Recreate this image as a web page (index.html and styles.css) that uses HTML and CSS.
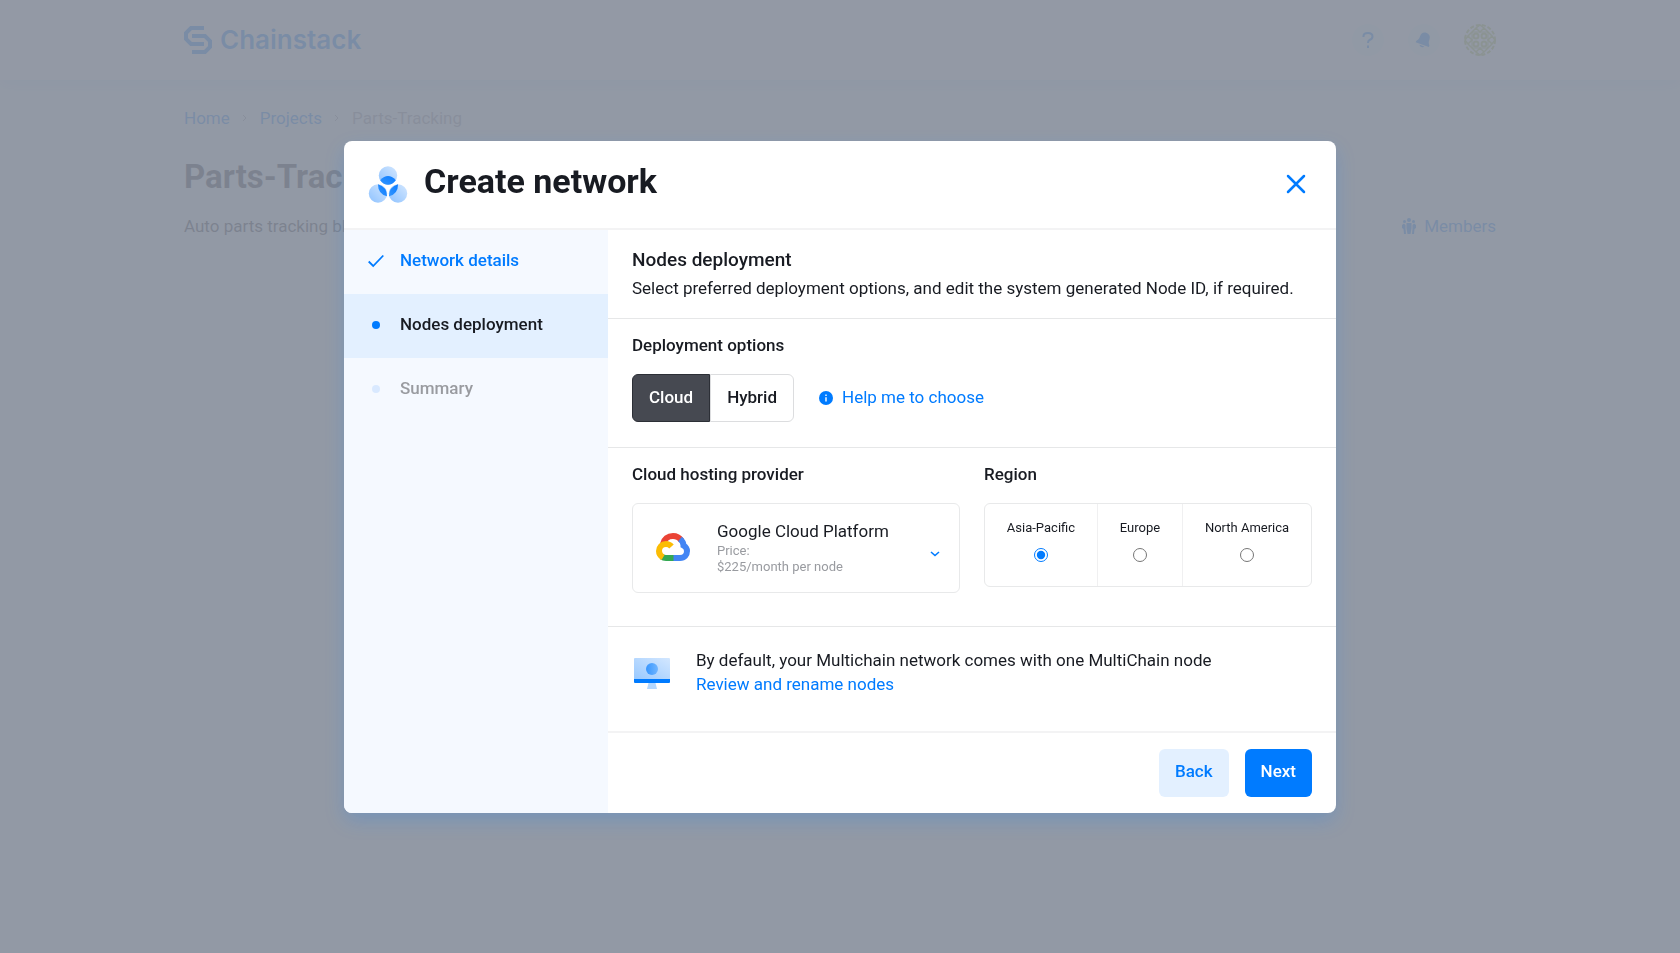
FILE: index.html
```html
<!DOCTYPE html>
<html lang="en">
<head>
<meta charset="utf-8">
<meta name="viewport" content="width=device-width, initial-scale=1">
<title>Chainstack – Create network</title>
<link rel="stylesheet" href="styles.css">
</head>
<body>
<header class="topbar">
  <div class="container topbar-inner">
    <a class="brand" href="#">
      <svg width="28" height="28" viewBox="0 0 28 28" fill="none" stroke="currentColor" stroke-width="4" aria-hidden="true">
        <path d="M20 2H7L2 7v6l5 5h13"/>
        <path d="M8 10h13l5 5v6l-5 5H8"/>
      </svg>
      <span>Chainstack</span>
    </a>
    <div class="tools">
      <button class="tool" type="button" aria-label="Help">
        <svg width="32" height="32" viewBox="0 0 32 32" fill="none" stroke="currentColor" stroke-width="2" aria-hidden="true"><path d="M11.500 13v-1q0-3 4.500-3t4.500 3.500q0 2.500-3 3.500-1.500.6-1.500 3"/><path d="M16 21.500v2.500"/></svg>
      </button>
      <button class="tool" type="button" aria-label="Notifications">
        <svg width="32" height="32" viewBox="0 0 32 32" fill="currentColor" aria-hidden="true"><g transform="rotate(20 16 16)"><path d="M16 8.500c3.500 0 5 2.500 5 5.500 0 3 .5 3.500 2 5.500V21H9v-1.500c1.500-2 2-2.500 2-5.500 0-3 1.500-5.500 5-5.500z"/><path d="M13.500 22h5c-.5 2-4.500 2-5 0z"/></g></svg>
      </button>
      <button class="avatar" type="button" aria-label="Account">
        <svg width="32" height="32" viewBox="0 0 32 32" fill="none" stroke="currentColor" stroke-width="2" aria-hidden="true">
          <circle cx="16" cy="16" r="15" stroke-dasharray="4 2"/><path d="M8 8h16v16H8z" stroke-width="1"/>
          <circle cx="12" cy="12" r="2.500"/><circle cx="20" cy="12" r="2.500"/><circle cx="12" cy="20" r="2.500"/><circle cx="20" cy="20" r="2.500"/>
          <path d="M8 8l4-4 4 4 4-4 4 4M8 24l4 4 4-4 4 4 4-4M8 8l-4 4 4 4-4 4 4 4M24 8l4 4-4 4 4 4-4 4M12 4l4-3 4 3M12 28l4 3 4-3M4 12l-3 4 3 4M28 12l3 4-3 4" stroke-width="1.500"/>
        </svg>
      </button>
    </div>
  </div>
</header>
<main class="container page">
  <nav class="crumbs" aria-label="Breadcrumb">
    <a href="#">Home</a>
    <svg width="6" height="8" viewBox="0 0 6 8" fill="none" stroke="currentColor" aria-hidden="true"><path d="M1 1l3 3-3 3"/></svg>
    <a href="#">Projects</a>
    <svg width="6" height="8" viewBox="0 0 6 8" fill="none" stroke="currentColor" aria-hidden="true"><path d="M1 1l3 3-3 3"/></svg>
    <span>Parts-Tracking</span>
  </nav>
  <h1 class="page-title">Parts-Tracking</h1>
  <div class="page-row">
    <p>Auto parts tracking blockchain</p>
    <a class="members" href="#">
      <svg width="14" height="16" viewBox="0 0 14 16" fill="currentColor" aria-hidden="true"><circle cx="7" cy="2" r="2"/><circle cx="2.500" cy="3.500" r="1.500"/><circle cx="11.500" cy="3.500" r="1.500"/><path d="M4.500 5h5v5.500l-1 5.500h-3l-1-5.500zM0 7l2-1.500L3.500 7v4l.5 5H2l-.5-5L0 10zM14 7l-2-1.500L10.500 7v4l-.5 5h2l.5-5 1.500-1z"/></svg>
      Members
    </a>
  </div>
</main>

<div class="overlay">
  <section class="modal" role="dialog" aria-modal="true" aria-labelledby="modal-title">
    <header class="modal-head">
      <svg width="40" height="39" viewBox="0 0 40 39" aria-hidden="true">
        <defs>
          <linearGradient id="bubble" x1="1" y1="0" x2="0" y2="1"><stop offset="0" stop-color="#d3e7ff"/><stop offset="1" stop-color="#8ec2ff"/></linearGradient>
          <linearGradient id="petal" x1="0" y1="1" x2="1" y2="0"><stop offset="0" stop-color="#3597ff"/><stop offset="1" stop-color="#087aff"/></linearGradient>
        </defs>
        <circle cx="20" cy="10.500" r="9.200" fill="url(#bubble)"/>
        <circle cx="10" cy="28.500" r="9.200" fill="url(#bubble)"/>
        <circle cx="30" cy="28.500" r="9.200" fill="url(#bubble)"/>
        <path d="M12.200 15.200q7.800-8.400 15.600 0-3.500 4.500-7.800 4.500t-7.800-4.500z" fill="url(#petal)"/>
        <path d="M10 19.300q9 2.500 9 12-9-2-9-12z" fill="url(#petal)"/>
        <path d="M30 19.300q-9 2.500-9 12 9-2 9-12z" fill="url(#petal)"/>
      </svg>
      <h2 class="modal-title" id="modal-title">Create network</h2>
      <button class="close" type="button" aria-label="Close">
        <svg width="20" height="20" viewBox="0 0 20 20" fill="none" stroke="currentColor" stroke-width="2.500" stroke-linecap="round" aria-hidden="true"><path d="M2 2l16 16M18 2L2 18"/></svg>
      </button>
    </header>
    <div class="modal-body">
      <ol class="steps">
        <li class="step done">
          <svg width="16" height="16" viewBox="0 0 16 16" fill="none" stroke="currentColor" stroke-width="1.800" aria-hidden="true"><path d="M.7 8.500l4.500 4.500L15.300 2.500"/></svg>
          <span>Network details</span>
        </li>
        <li class="step current" aria-current="step"><i class="dot"></i><span>Nodes deployment</span></li>
        <li class="step"><i class="dot"></i><span>Summary</span></li>
      </ol>
      <form class="content">
        <div class="block intro">
          <h3>Nodes deployment</h3>
          <p>Select preferred deployment options, and edit the system generated Node ID, if required.</p>
        </div>
        <div class="block">
          <h4 id="options-label">Deployment options</h4>
          <div class="options">
            <div class="toggle" role="group" aria-labelledby="options-label">
              <button class="on" type="button" aria-pressed="true">Cloud</button>
              <button type="button" aria-pressed="false">Hybrid</button>
            </div>
            <a class="help" href="#">
              <svg width="14" height="14" viewBox="0 0 14 14" aria-hidden="true"><circle cx="7" cy="7" r="7" fill="currentColor"/><path d="M7 3.400v1.500M7 6.200v4.400" stroke="#fff" stroke-width="1.400" fill="none"/></svg>
              <span>Help me to choose</span>
            </a>
          </div>
        </div>
        <div class="block hosting">
          <div class="field">
            <h4><label for="provider">Cloud hosting provider</label></h4>
            <div class="card provider">
              <svg width="34" height="28" viewBox="0 0 34 28" fill="none" stroke-width="6" aria-hidden="true">
                <path d="M7 11C8 6 12 3 17 3c3.500 0 6.500 1.800 8.500 4.500" stroke="#ea4335"/>
                <path d="M24 6c2.500 2 3.500 4 3.500 6.500 2.500 1.500 3.500 3 3.500 5.500 0 4-2.500 7-7 7h-7" stroke="#4285f4"/>
                <path d="M17.500 25H10q-2.500 0-4.500-1.500" stroke="#34a853"/>
                <path d="M7 24.500c-2.500-1.500-4-3.500-4-6.500 0-4 3-7 7-7 2.500 0 4 .8 5.500 2.500" stroke="#fbbc04"/>
              </svg>
              <div class="provider-text">
                <select id="provider"><option>Google Cloud Platform</option></select>
                <p>Price:<br>$225/month per node</p>
              </div>
              <svg class="chevron" width="10" height="6" viewBox="0 0 10 6" fill="none" stroke="currentColor" stroke-width="1.600" aria-hidden="true"><path d="M1 1l4 3.500L9 1"/></svg>
            </div>
          </div>
          <div class="field">
            <h4 id="region-label">Region</h4>
            <div class="card regions" role="radiogroup" aria-labelledby="region-label">
              <label>Asia-Pacific<input type="radio" name="region" checked></label>
              <label>Europe<input type="radio" name="region"></label>
              <label>North America<input type="radio" name="region"></label>
            </div>
          </div>
        </div>
        <div class="block nodes">
          <svg width="40" height="40" viewBox="0 -1 40 40" aria-hidden="true">
            <defs>
              <linearGradient id="screen" x1="1" y1="0" x2="0" y2="1"><stop offset="0" stop-color="#d3e7ff"/><stop offset="1" stop-color="#99c9ff"/></linearGradient>
              <linearGradient id="lens" x1="0" y1="0" x2="1" y2="0"><stop offset="0" stop-color="#3796ff"/><stop offset="1" stop-color="#70b5ff"/></linearGradient>
            </defs>
            <path d="M2 6q0-1 1-1h34q1 0 1 1v20H2z" fill="url(#screen)"/>
            <path d="M2 26h36v3q0 1-1 1H3q-1 0-1-1z" fill="#007bff"/>
            <circle cx="20" cy="16" r="6" fill="url(#lens)"/>
            <path d="M16.500 30h7l1.500 6H15z" fill="#b3d7ff"/>
          </svg>
          <div>
            <p>By default, your Multichain network comes with one MultiChain node</p>
            <a href="#">Review and rename nodes</a>
          </div>
        </div>
        <div class="actions">
          <button class="btn" type="button">Back</button>
          <button class="btn primary" type="submit">Next</button>
        </div>
      </form>
    </div>
  </section>
</div>
</body>
</html>
```
FILE: styles.css
```css
* { box-sizing: border-box; margin: 0; padding: 0; }
body {
  min-height: 100vh;
  background: #f6f9ff;
  color: #181b22;
  font: 17px/24px Roboto, "Liberation Sans", sans-serif;
}
a { color: #007bff; text-decoration: none; }
button, select { font: inherit; color: inherit; border: 0; background: none; cursor: pointer; }
svg { display: block; flex: none; }
h3, h4 { font-size: 17px; font-weight: 500; }
h4 { line-height: 22px; }

.container { max-width: 1360px; margin: 0 auto; padding: 0 24px; }
.topbar { background: #fff; box-shadow: 0 4px 16px #c8f0f5; }
.topbar-inner { display: flex; align-items: center; justify-content: space-between; height: 80px; }
.brand { display: flex; align-items: center; gap: 8px; font: 600 26px/32px Inter, "Liberation Sans", sans-serif; }
.tools { display: flex; gap: 24px; }
.tool { width: 32px; height: 32px; border-radius: 50%; background: #e6f9ff; color: #007bff; }
.avatar { width: 32px; height: 32px; color: #a9bd40; }
.page { padding-top: 26px; }
.crumbs { display: flex; align-items: center; gap: 12px; color: #8f939b; }
.page-title { margin-top: 27px; font-size: 33px; line-height: 40px; font-weight: 700; }
.page-row { display: flex; justify-content: space-between; margin-top: 17px; }
.members { display: flex; align-items: center; gap: 8px; }

.overlay {
  position: fixed;
  inset: 0;
  display: flex;
  align-items: center;
  justify-content: center;
  background: rgba(135, 142, 155, 0.9);
}
.modal {
  width: 992px;
  max-width: 100%;
  overflow: hidden;
  border-radius: 8px;
  background: #fff;
  box-shadow: 0 8px 20px rgba(0, 123, 255, 0.2);
}
.modal-head { display: flex; align-items: center; gap: 16px; padding: 24px; border-bottom: 2px solid #f3f3f4; }
.modal-title { flex: 1; align-self: flex-start; font-size: 34px; line-height: 32px; font-weight: 700; }
.close { padding: 6px; color: #007bff; }
.modal-body { display: grid; grid-template-columns: 264px 1fr; }

.steps { list-style: none; background: #f5f9ff; }
.step { display: flex; align-items: center; gap: 16px; height: 64px; padding: 0 24px 2px; color: #999ba0; font-weight: 500; }
.step span { padding-bottom: 2px; }
.step.done { color: #007bff; }
.step.current { background: #e3f0ff; color: #181b22; }
.dot { width: 8px; height: 8px; margin: 0 4px; border-radius: 50%; background: #d9e9ff; }
.current .dot { background: #007bff; }

.block { padding: 15px 24px 25px; border-bottom: 1px solid #e6e7e8; }
.block.intro { padding: 16px 24px; line-height: 28px; }
.intro h3 { font-size: 19px; }
.options { display: flex; align-items: center; gap: 25px; margin-top: 18px; }
.toggle { display: flex; }
.toggle button { height: 48px; padding: 0 16px 2px; border: 1px solid #dcdddf; border-radius: 0 6px 6px 0; font-weight: 500; }
.toggle .on { border-color: #2c2f36; border-radius: 6px 0 0 6px; background: #464951; color: #fff; }
.help { display: flex; align-items: center; gap: 9px; }
.help span { padding-bottom: 2px; }
.block.hosting { display: grid; grid-template-columns: 1fr 1fr; align-items: start; gap: 24px; padding-bottom: 33px; }
.card { margin-top: 18px; border: 1px solid #e8e9ea; border-radius: 6px; }
.provider { display: flex; align-items: center; padding: 15px 19px 17px 23px; color: #007bff; }
.provider-text { flex: 1; margin-left: 27px; color: #181b22; }
.provider select { display: block; height: 24px; width: 100%; appearance: none; }
.provider p { color: #999ba0; font-size: 13px; line-height: 16px; }
.chevron { margin-top: 14px; }
.regions { display: flex; }
.regions label { display: flex; flex: 1 1 auto; flex-direction: column; align-items: center; gap: 12px; height: 82px; padding-top: 16px; font-size: 13px; line-height: 16px; }
.regions label + label { border-left: 1px solid #f0f0f1; }
.regions input { width: 14px; height: 14px; accent-color: #007bff; }
.block.nodes { display: flex; align-items: center; gap: 24px; padding: 21px 24px 35px; border-bottom: 2px solid #f3f3f4; }
.actions { display: flex; justify-content: flex-end; gap: 16px; padding: 16px 24px; }
.btn { height: 48px; padding: 0 16px 3px; border-radius: 6px; background: #e3f0ff; color: #007bff; font-weight: 500; }
.btn.primary { background: #007bff; color: #fff; }
```
